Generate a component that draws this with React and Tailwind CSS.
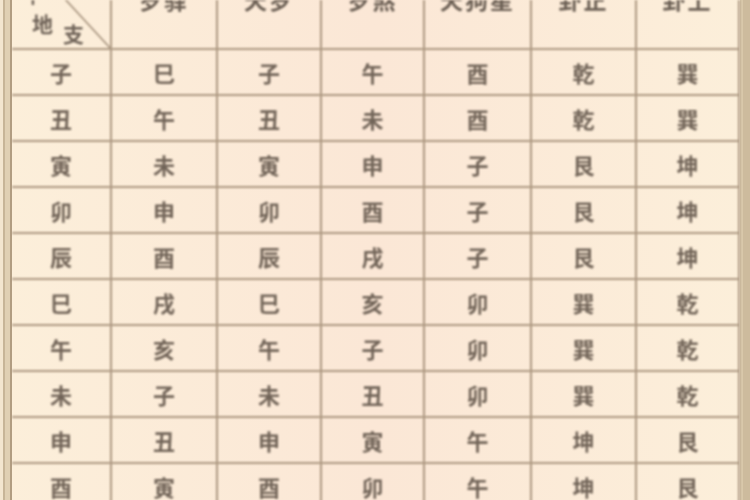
import React from "react";

const heads = ["岁驿", "天罗", "岁煞", "天狗星", "卦正", "卦上"];

const rows = [
  ["子", "巳", "子", "午", "酉", "乾", "巽"],
  ["丑", "午", "丑", "未", "酉", "乾", "巽"],
  ["寅", "未", "寅", "申", "子", "艮", "坤"],
  ["卯", "申", "卯", "酉", "子", "艮", "坤"],
  ["辰", "酉", "辰", "戌", "子", "艮", "坤"],
  ["巳", "戌", "巳", "亥", "卯", "巽", "乾"],
  ["午", "亥", "午", "子", "卯", "巽", "乾"],
  ["未", "子", "未", "丑", "卯", "巽", "乾"],
  ["申", "丑", "申", "寅", "午", "坤", "艮"],
  ["酉", "寅", "酉", "卯", "午", "坤", "艮"],
];

const App = () => {
  return (
    <div
      className="w-[750px] h-[500px] overflow-hidden flex bg-gradient-to-r from-[#fcefda] via-[#fbe7d6] to-[#fcefda] text-[#6f6358]"
      style={{ fontFamily: '"Noto Sans CJK SC", "Noto Sans CJK TC", serif' }}
    >
      {/* left binding strip */}
      <div className="w-[12px] h-full flex shrink-0">
        <div className="w-[3px] bg-[#f3e6cf]" />
        <div className="w-[2px] bg-[#c7b597]" />
        <div className="w-[5px] bg-[#e0d0b3]" />
        <div className="w-[2px] bg-[#b19d82]" />
      </div>

      <div className="w-[728px] shrink-0 blur-[0.8px]">
        <div className="grid grid-cols-[100px_106px_104px_103px_107px_105px_103px]">
          {/* corner header */}
          <div className="relative h-[50px] border-r-2 border-b-2 border-[#ad9982] overflow-hidden">
            <svg className="absolute inset-0" width="100" height="50">
              <line x1="52" y1="-2" x2="100" y2="50" stroke="#a08c77" strokeWidth="1.5" />
            </svg>
            <div className="flex items-start pl-[12px] -mt-[14px] text-[18px] font-bold leading-none">
              <span>干</span>
            </div>
            <div className="flex items-start pl-[20px] pt-[9px] gap-[10px] text-[21px] font-bold leading-none">
              <span>地</span>
              <span className="mt-[10px]">支</span>
            </div>
          </div>
          {heads.map((h, i) => (
            <div
              key={i}
              className="h-[50px] border-r-2 border-b-2 border-[#ad9982] overflow-hidden flex justify-center"
            >
              <span className="-mt-[12px] text-[23px] font-bold leading-none tracking-[2px] text-[#6a5e53]">
                {h}
              </span>
            </div>
          ))}

          {rows.map((r, ri) =>
            r.map((c, ci) => (
              <div
                key={ri + "-" + ci}
                className="h-[46px] border-r-2 border-b-2 border-[#ad9982] flex items-center justify-center text-[22px] font-bold text-[#716458]"
              >
                {c}
              </div>
            ))
          )}
        </div>
      </div>

      {/* right edge strip */}
      <div className="w-[10px] h-full flex shrink-0">
        <div className="w-[3px] bg-[#d9c8aa]" />
        <div className="w-[7px] bg-[#cdbb9d]" />
      </div>
    </div>
  );
};

export default App;
